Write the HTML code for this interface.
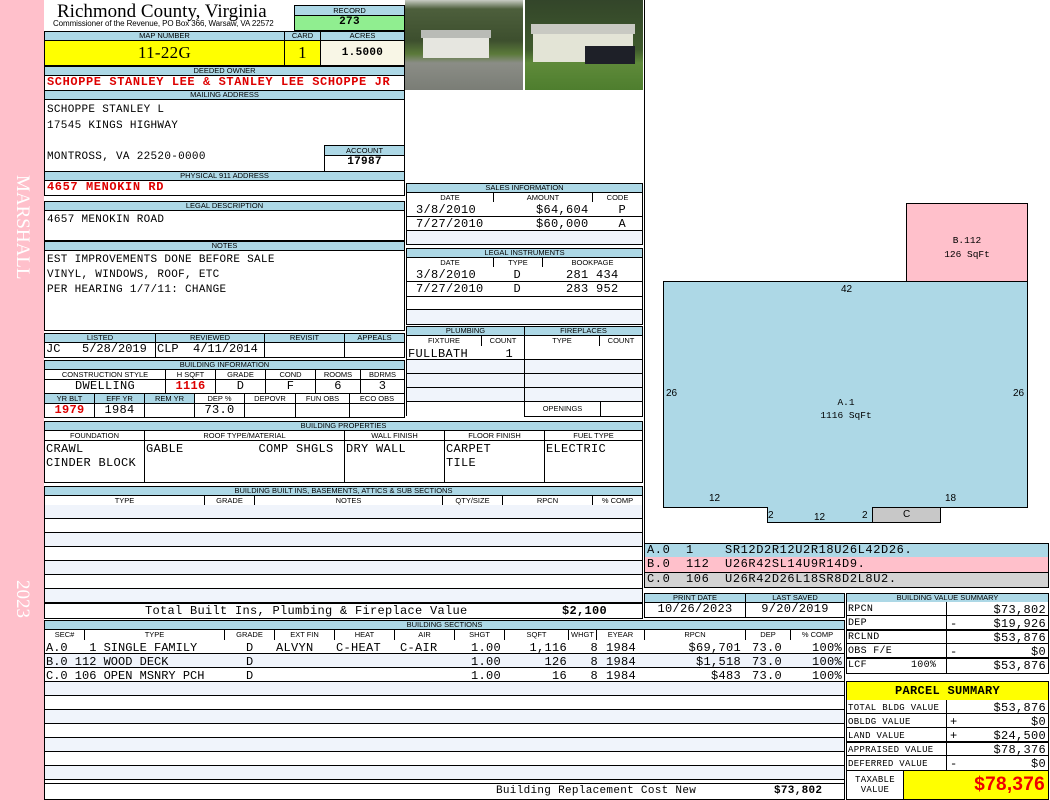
<!DOCTYPE html>
<html><head><meta charset="utf-8"><style>
*{margin:0;padding:0}
body{width:1050px;height:800px;position:relative;background:#fff;overflow:hidden;font-family:"Liberation Mono",monospace}
div{position:absolute;box-sizing:border-box}
.l{background:#add8e6;border:1px solid #000;font:7.5px/8px "Liberation Sans",sans-serif;text-align:center;color:#000;white-space:nowrap;overflow:hidden}
.h{background:#fff;border:1px solid #000;font:7.5px/9px "Liberation Sans",sans-serif;text-align:center;white-space:nowrap;overflow:hidden}
.c{border:1px solid #000;font-size:11px;line-height:13px;white-space:pre;overflow:hidden;letter-spacing:.3px}
.t{font-size:11px;line-height:13px;white-space:pre;letter-spacing:.3px}
.n{font-size:11px;line-height:13px;white-space:pre;letter-spacing:.3px;text-align:right}
.r{color:#d00;font-weight:bold}
.ctr{text-align:center}.rt{text-align:right;padding-right:3px}
.rows{background:repeating-linear-gradient(#f0f4fb 0 13px,#000 13px 14px,#fff 14px 27px,#000 27px 28px)}
</style></head><body>
<div style="left:0;top:0;width:44px;height:800px;background:#ffc0cb"></div>
<div style="left:22px;top:175px;width:0;height:0"><div style="left:-10px;top:0;transform:rotate(90deg);transform-origin:10px 10px;font:19px 'Liberation Serif',serif;color:#fff;white-space:nowrap;line-height:20px">MARSHALL</div></div>
<div style="left:22px;top:580px;width:0;height:0"><div style="left:-10px;top:0;transform:rotate(90deg);transform-origin:10px 10px;font:19px 'Liberation Serif',serif;color:#fff;white-space:nowrap;line-height:20px">2023</div></div>

<!-- header -->
<div style="left:57px;top:1px;font:19px/21px 'Liberation Serif',serif;white-space:nowrap">Richmond County, Virginia</div>
<div style="left:53px;top:19px;font:8px/9px 'Liberation Sans',sans-serif;white-space:nowrap;letter-spacing:-.1px">Commissioner of the Revenue, PO Box 366, Warsaw, VA 22572</div>
<div class="l" style="left:294px;top:5px;width:111px;height:11px;line-height:9px">RECORD</div>
<div class="c ctr" style="left:294px;top:15px;width:111px;height:16px;background:#90ee90;font-weight:bold">273</div>
<div class="l" style="left:44px;top:31px;width:241px;height:10px">MAP NUMBER</div>
<div class="l" style="left:284px;top:31px;width:37px;height:10px">CARD</div>
<div class="l" style="left:320px;top:31px;width:85px;height:10px">ACRES</div>
<div class="c ctr" style="left:44px;top:40px;width:241px;height:26px;background:#ff0;font:17px/24px 'Liberation Serif',serif">11-22G</div>
<div class="c ctr" style="left:284px;top:40px;width:37px;height:26px;background:#ff0;font:17px/24px 'Liberation Serif',serif">1</div>
<div class="c ctr" style="left:320px;top:40px;width:85px;height:26px;background:#f8f6e6;font-weight:bold;line-height:24px">1.5000</div>
<div class="l" style="left:44px;top:66px;width:361px;height:10px">DEEDED OWNER</div>
<div class="c r" style="left:44px;top:75px;width:361px;height:16px;padding-left:2px;font-size:12px;letter-spacing:.6px">SCHOPPE STANLEY LEE &amp; STANLEY LEE SCHOPPE JR</div>
<div class="l" style="left:44px;top:90px;width:361px;height:10px">MAILING ADDRESS</div>
<div class="c" style="left:44px;top:99px;width:361px;height:73px;padding:3px 2px;line-height:15.5px">SCHOPPE STANLEY L<br>17545 KINGS HIGHWAY<br><br>MONTROSS, VA 22520-0000</div>
<div class="l" style="left:324px;top:145px;width:81px;height:11px;line-height:9px">ACCOUNT</div>
<div class="c ctr" style="left:324px;top:155px;width:81px;height:17px;font-weight:bold;background:#fff">17987</div>
<div class="l" style="left:44px;top:171px;width:361px;height:10px">PHYSICAL 911 ADDRESS</div>
<div class="c r" style="left:44px;top:180px;width:361px;height:16px;padding-left:2px;font-size:12px;letter-spacing:.6px">4657 MENOKIN RD</div>
<div class="l" style="left:44px;top:201px;width:361px;height:10px">LEGAL DESCRIPTION</div>
<div class="c" style="left:44px;top:210px;width:361px;height:31px;padding:3px 2px">4657 MENOKIN ROAD</div>
<div class="l" style="left:44px;top:241px;width:361px;height:10px">NOTES</div>
<div class="c" style="left:44px;top:250px;width:361px;height:81px;padding:2px 2px;line-height:15px">EST IMPROVEMENTS DONE BEFORE SALE<br>VINYL, WINDOWS, ROOF, ETC<br>PER HEARING 1/7/11: CHANGE</div>

<div class="l" style="left:44px;top:333px;width:112px;height:10px">LISTED</div>
<div class="l" style="left:155px;top:333px;width:110px;height:10px">REVIEWED</div>
<div class="l" style="left:264px;top:333px;width:81px;height:10px">REVISIT</div>
<div class="l" style="left:344px;top:333px;width:61px;height:10px">APPEALS</div>
<div class="c" style="left:44px;top:342px;width:112px;height:16px;padding-left:1px;font-size:12px;letter-spacing:0">JC   5/28/2019</div>
<div class="c" style="left:155px;top:342px;width:110px;height:16px;padding-left:1px;font-size:12px;letter-spacing:0">CLP  4/11/2014</div>
<div class="c" style="left:264px;top:342px;width:81px;height:16px"></div>
<div class="c" style="left:344px;top:342px;width:61px;height:16px"></div>

<div class="l" style="left:44px;top:360px;width:361px;height:10px">BUILDING INFORMATION</div>
<div class="h" style="left:44px;top:369px;width:122px;height:11px">CONSTRUCTION STYLE</div>
<div class="h" style="left:165px;top:369px;width:51px;height:11px">H SQFT</div>
<div class="h" style="left:215px;top:369px;width:51px;height:11px">GRADE</div>
<div class="h" style="left:265px;top:369px;width:51px;height:11px">COND</div>
<div class="h" style="left:315px;top:369px;width:46px;height:11px">ROOMS</div>
<div class="h" style="left:360px;top:369px;width:45px;height:11px">BDRMS</div>
<div class="c ctr" style="left:44px;top:379px;width:122px;height:15px;font-size:12px">DWELLING</div>
<div class="c ctr r" style="left:165px;top:379px;width:51px;height:15px;font-size:12px">1116</div>
<div class="c ctr" style="left:215px;top:379px;width:51px;height:15px;font-size:12px">D</div>
<div class="c ctr" style="left:265px;top:379px;width:51px;height:15px;font-size:12px">F</div>
<div class="c ctr" style="left:315px;top:379px;width:46px;height:15px;font-size:12px">6</div>
<div class="c ctr" style="left:360px;top:379px;width:45px;height:15px;font-size:12px">3</div>
<div class="l" style="left:44px;top:393px;width:51px;height:11px;line-height:9px">YR BLT</div>
<div class="l" style="left:94px;top:393px;width:51px;height:11px;line-height:9px">EFF YR</div>
<div class="l" style="left:144px;top:393px;width:51px;height:11px;line-height:9px">REM YR</div>
<div class="h" style="left:194px;top:393px;width:51px;height:11px">DEP %</div>
<div class="h" style="left:244px;top:393px;width:52px;height:11px">DEPOVR</div>
<div class="h" style="left:295px;top:393px;width:55px;height:11px">FUN OBS</div>
<div class="h" style="left:349px;top:393px;width:56px;height:11px">ECO OBS</div>
<div class="c ctr r" style="left:44px;top:403px;width:51px;height:15px;font-size:12px">1979</div>
<div class="c ctr" style="left:94px;top:403px;width:51px;height:15px;font-size:12px">1984</div>
<div class="c" style="left:144px;top:403px;width:51px;height:15px"></div>
<div class="c ctr" style="left:194px;top:403px;width:51px;height:15px;font-size:12px">73.0</div>
<div class="c" style="left:244px;top:403px;width:52px;height:15px"></div>
<div class="c" style="left:295px;top:403px;width:55px;height:15px"></div>
<div class="c" style="left:349px;top:403px;width:56px;height:15px"></div>

<!-- building properties -->
<div class="l" style="left:44px;top:421px;width:599px;height:10px">BUILDING PROPERTIES</div>
<div class="h" style="left:44px;top:430px;width:101px;height:11px">FOUNDATION</div>
<div class="h" style="left:144px;top:430px;width:201px;height:11px">ROOF TYPE/MATERIAL</div>
<div class="h" style="left:344px;top:430px;width:101px;height:11px">WALL FINISH</div>
<div class="h" style="left:444px;top:430px;width:101px;height:11px">FLOOR FINISH</div>
<div class="h" style="left:544px;top:430px;width:99px;height:11px">FUEL TYPE</div>
<div class="c" style="left:44px;top:440px;width:101px;height:43px;padding:1px 1px;line-height:14px;font-size:12px">CRAWL<br>CINDER BLOCK</div>
<div class="c" style="left:144px;top:440px;width:201px;height:43px;padding:1px 1px;line-height:14px;font-size:12px">GABLE          COMP SHGLS</div>
<div class="c" style="left:344px;top:440px;width:101px;height:43px;padding:1px 1px;line-height:14px;font-size:12px">DRY WALL</div>
<div class="c" style="left:444px;top:440px;width:101px;height:43px;padding:1px 1px;line-height:14px;font-size:12px">CARPET<br>TILE</div>
<div class="c" style="left:544px;top:440px;width:99px;height:43px;padding:1px 1px;line-height:14px;font-size:12px">ELECTRIC</div>

<!-- built ins -->
<div class="l" style="left:44px;top:486px;width:599px;height:10px">BUILDING BUILT INS, BASEMENTS, ATTICS &amp; SUB SECTIONS</div>
<div class="h" style="left:44px;top:495px;width:161px;height:11px">TYPE</div>
<div class="h" style="left:204px;top:495px;width:51px;height:11px">GRADE</div>
<div class="h" style="left:254px;top:495px;width:189px;height:11px">NOTES</div>
<div class="h" style="left:442px;top:495px;width:61px;height:11px">QTY/SIZE</div>
<div class="h" style="left:502px;top:495px;width:91px;height:11px">RPCN</div>
<div class="h" style="left:592px;top:495px;width:51px;height:11px">% COMP</div>
<div class="rows" style="left:44px;top:505px;width:599px;height:99px;border:1px solid #000;border-top:0"></div>
<div class="c" style="left:44px;top:603px;width:599px;height:16px;font-size:12px;line-height:14px"><span class="t" style="position:absolute;left:100px;font-size:12px;line-height:14px">Total Built Ins, Plumbing &amp; Fireplace Value</span><span style="position:absolute;left:517px;font-weight:bold;font-size:12px">$2,100</span></div>

<!-- building sections -->
<div class="l" style="left:44px;top:620px;width:801px;height:10px">BUILDING SECTIONS</div>
<div class="h" style="left:44px;top:629px;width:41px;height:12px">SEC#</div>
<div class="h" style="left:84px;top:629px;width:141px;height:12px">TYPE</div>
<div class="h" style="left:224px;top:629px;width:51px;height:12px">GRADE</div>
<div class="h" style="left:274px;top:629px;width:61px;height:12px">EXT FIN</div>
<div class="h" style="left:334px;top:629px;width:61px;height:12px">HEAT</div>
<div class="h" style="left:394px;top:629px;width:61px;height:12px">AIR</div>
<div class="h" style="left:454px;top:629px;width:51px;height:12px">SHGT</div>
<div class="h" style="left:504px;top:629px;width:65px;height:12px">SQFT</div>
<div class="h" style="left:568px;top:629px;width:29px;height:12px">WHGT</div>
<div class="h" style="left:596px;top:629px;width:49px;height:12px">EYEAR</div>
<div class="h" style="left:644px;top:629px;width:102px;height:12px">RPCN</div>
<div class="h" style="left:745px;top:629px;width:46px;height:12px">DEP</div>
<div class="h" style="left:790px;top:629px;width:55px;height:12px">% COMP</div>
<div style="left:44px;top:640px;width:801px;height:144px;border:1px solid #000;border-top:0;background:repeating-linear-gradient(#fff 0 13px,#000 13px 14px,#f0f4fb 14px 27px,#000 27px 28px)"></div>
<div class="t" style="left:46px;top:641px;line-height:14px;font-size:12px;letter-spacing:0">A.0   1 SINGLE FAMILY<br>B.0 112 WOOD DECK<br>C.0 106 OPEN MSNRY PCH</div>
<div class="t" style="left:246px;top:641px;line-height:14px;font-size:12px">D<br>D<br>D</div>
<div class="t" style="left:276px;top:641px;line-height:14px;font-size:12px">ALVYN</div>
<div class="t" style="left:336px;top:641px;line-height:14px;font-size:12px">C-HEAT</div>
<div class="t" style="left:400px;top:641px;line-height:14px;font-size:12px">C-AIR</div>
<div class="n" style="left:454px;width:47px;top:641px;line-height:14px;font-size:12px">1.00<br>1.00<br>1.00</div>
<div class="n" style="left:504px;width:63px;top:641px;line-height:14px;font-size:12px">1,116<br>126<br>16</div>
<div class="n" style="left:568px;width:30px;top:641px;line-height:14px;font-size:12px">8<br>8<br>8</div>
<div class="t" style="left:606px;top:641px;line-height:14px;font-size:12px">1984<br>1984<br>1984</div>
<div class="n" style="left:644px;width:97px;top:641px;line-height:14px;font-size:12px">$69,701<br>$1,518<br>$483</div>
<div class="t" style="left:752px;top:641px;line-height:14px;font-size:12px">73.0<br>73.0<br>73.0</div>
<div class="n" style="left:790px;width:52px;top:641px;line-height:14px;font-size:12px">100%<br>100%<br>100%</div>
<div class="c" style="left:44px;top:783px;width:801px;height:17px"><span class="t" style="position:absolute;left:451px;top:1px">Building Replacement Cost New</span><span class="t" style="position:absolute;left:729px;top:1px;font-weight:bold">$73,802</span></div>

<!-- photos -->
<div style="left:405px;top:0;width:118px;height:90px;background:linear-gradient(#c8ccc4 0,#4d5f3c 10%,#3d4f2e 45%,#5b7a3a 60%,#8b8d86 70%,#7a7d76 100%)">
<div style="left:18px;top:36px;width:66px;height:22px;background:#e6e6e0"></div><div style="left:16px;top:30px;width:70px;height:8px;background:#b9bbb6"></div></div>
<div style="left:525px;top:0;width:118px;height:90px;background:linear-gradient(#33452a 0,#3f5a2c 55%,#5f8a3a 70%,#4e7e2e 100%)">
<div style="left:8px;top:32px;width:100px;height:30px;background:#e3e4d6"></div><div style="left:6px;top:24px;width:104px;height:10px;background:#c8c9c2"></div><div style="left:60px;top:46px;width:50px;height:18px;background:#1e2028"></div></div>

<!-- sales -->
<div class="l" style="left:406px;top:183px;width:237px;height:10px">SALES INFORMATION</div>
<div class="h" style="left:406px;top:192px;width:88px;height:11px">DATE</div>
<div class="h" style="left:493px;top:192px;width:100px;height:11px">AMOUNT</div>
<div class="h" style="left:592px;top:192px;width:51px;height:11px">CODE</div>
<div style="left:406px;top:202px;width:237px;height:43px;border:1px solid #000;border-top:0;background:linear-gradient(#fff 0 14px,#000 14px 15px,#fff 15px 28px,#000 28px 29px,#f0f4fb 29px)"></div>
<div class="t" style="left:416px;top:204px;font-size:12px">3/8/2010        $64,604    P</div>
<div class="t" style="left:416px;top:218px;font-size:12px">7/27/2010       $60,000    A</div>
<div class="l" style="left:406px;top:248px;width:237px;height:10px">LEGAL INSTRUMENTS</div>
<div class="h" style="left:406px;top:257px;width:88px;height:11px">DATE</div>
<div class="h" style="left:493px;top:257px;width:50px;height:11px">TYPE</div>
<div class="h" style="left:542px;top:257px;width:101px;height:11px">BOOKPAGE</div>
<div style="left:406px;top:267px;width:237px;height:58px;border:1px solid #000;border-top:0;background:linear-gradient(#fff 0 14px,#000 14px 15px,#fff 15px 29px,#000 29px 30px,#fff 30px 42px,#000 42px 43px,#f0f4fb 43px)"></div>
<div class="t" style="left:416px;top:269px;font-size:12px">3/8/2010     D      281 434</div>
<div class="t" style="left:416px;top:283px;font-size:12px">7/27/2010    D      283 952</div>
<div class="l" style="left:406px;top:326px;width:119px;height:10px">PLUMBING</div>
<div class="l" style="left:524px;top:326px;width:119px;height:10px">FIREPLACES</div>
<div class="h" style="left:406px;top:335px;width:76px;height:12px">FIXTURE</div>
<div class="h" style="left:481px;top:335px;width:44px;height:12px">COUNT</div>
<div class="h" style="left:524px;top:335px;width:76px;height:12px">TYPE</div>
<div class="h" style="left:599px;top:335px;width:44px;height:12px">COUNT</div>
<div style="left:406px;top:346px;width:119px;height:71px;border-right:1px solid #000;background:linear-gradient(#fff 0 13px,#000 13px 14px,#f0f4fb 14px 27px,#000 27px 28px,#f0f4fb 28px 41px,#000 41px 42px,#f0f4fb 42px 55px,#000 55px 56px,#fff 56px)"></div>
<div style="left:524px;top:346px;width:119px;height:71px;border:1px solid #000;border-top:0;background:linear-gradient(#fff 0 13px,#000 13px 14px,#f0f4fb 14px 27px,#000 27px 28px,#f0f4fb 28px 41px,#000 41px 42px,#f0f4fb 42px 55px,#000 55px 56px,#fff 56px)"></div>
<div style="left:406px;top:346px;width:1px;height:70px;background:#000"></div>
<div class="t" style="left:408px;top:348px;font-size:12px">FULLBATH     1</div>
<div class="h" style="left:524px;top:402px;width:77px;height:15px;line-height:13px;border-top:0">OPENINGS</div>

<!-- sketch -->
<div style="left:644px;top:0;width:1px;height:543px;background:#000"></div>
<svg style="position:absolute;left:0;top:0" width="1050" height="800">
<rect x="906.5" y="203.5" width="121" height="78" fill="#ffc0cb" stroke="#000"/>
<polygon points="663.5,281.5 1027.5,281.5 1027.5,507.5 872.5,507.5 872.5,522.5 767.5,522.5 767.5,507.5 663.5,507.5" fill="#add8e6" stroke="#000"/>
<rect x="872.5" y="507.5" width="68" height="15" fill="#c8c8c8" stroke="#000"/>
<g font-family="Liberation Sans,sans-serif" font-size="10">
<text x="841" y="292">42</text><text x="666" y="396">26</text><text x="1013" y="396">26</text>
<text x="709" y="501">12</text><text x="945" y="501">18</text><text x="768" y="518">2</text><text x="814" y="520">12</text><text x="862" y="518">2</text><text x="903" y="517">C</text></g>
<g font-family="Liberation Mono,monospace" font-size="9.5" text-anchor="middle">
<text x="846" y="405">A.1</text><text x="846" y="418">1116 SqFt</text>
<text x="967" y="243">B.112</text><text x="967" y="257">126 SqFt</text></g>
</svg>

<div class="c" style="left:644px;top:543px;width:405px;height:15px;background:#add8e6;border-bottom:0;font-size:12px;padding-left:2px;letter-spacing:.6px">A.0  1    SR12D2R12U2R18U26L42D26.</div>
<div class="c" style="left:644px;top:557px;width:405px;height:15px;background:#ffc0cb;border-bottom:0;border-top:0;font-size:12px;padding-left:2px;line-height:15px;letter-spacing:.6px">B.0  112  U26R42SL14U9R14D9.</div>
<div class="c" style="left:644px;top:572px;width:405px;height:16px;background:#d3d3d3;font-size:12px;padding-left:2px;letter-spacing:.6px">C.0  106  U26R42D26L18SR8D2L8U2.</div>

<div class="l" style="left:644px;top:593px;width:102px;height:10px">PRINT DATE</div>
<div class="l" style="left:745px;top:593px;width:100px;height:10px">LAST SAVED</div>
<div class="c ctr" style="left:644px;top:602px;width:102px;height:16px;font-size:12px">10/26/2023</div>
<div class="c ctr" style="left:745px;top:602px;width:100px;height:16px;font-size:12px">9/20/2019</div>

<div class="l" style="left:846px;top:593px;width:203px;height:10px">BUILDING VALUE SUMMARY</div>
<div style="left:846px;top:602px;width:203px;height:72px;border:1px solid #000;border-top:0;background:linear-gradient(#fff 0 13px,#000 13px 14px,#fff 14px 27px,#000 27px 29px,#fff 29px 41px,#000 41px 42px,#fff 42px 55px,#000 55px 57px,#fff 57px)"></div>
<div style="left:946px;top:602px;width:1px;height:71px;background:#000"></div>
<div class="t" style="left:848px;top:603px;font-size:10px;line-height:14px">RPCN<br>DEP<br>RCLND<br>OBS F/E<br>LCF       100%</div>
<div class="t" style="left:950px;top:603px;width:96px;font-size:12px;line-height:14px;text-align:right">$73,802<br>$19,926<br>$53,876<br>$0<br>$53,876</div>
<div class="t" style="left:950px;top:603px;font-size:12px;line-height:14px"><br>-<br><br>-</div>

<div class="c ctr" style="left:846px;top:681px;width:203px;height:20px;background:#ff0;font-weight:bold;font-size:12px;line-height:18px;font-family:'Liberation Mono',monospace">PARCEL SUMMARY</div>
<div style="left:846px;top:700px;width:203px;height:71px;border:1px solid #000;border-top:0;background:linear-gradient(#fff 0 13px,#000 13px 14px,#fff 14px 27px,#000 27px 28px,#fff 28px 41px,#000 41px 43px,#fff 43px 55px,#000 55px 56px,#fff 56px)"></div>
<div style="left:946px;top:700px;width:1px;height:70px;background:#000"></div>
<div class="t" style="left:848px;top:701px;font-size:9px;line-height:14px">TOTAL BLDG VALUE<br>OBLDG VALUE<br>LAND VALUE<br>APPRAISED VALUE<br>DEFERRED VALUE</div>
<div class="t" style="left:950px;top:701px;width:96px;font-size:12px;line-height:14px;text-align:right">$53,876<br>$0<br>$24,500<br>$78,376<br>$0</div>
<div class="t" style="left:950px;top:701px;font-size:12px;line-height:14px"><br>+<br>+<br><br>-</div>
<div class="c" style="left:846px;top:770px;width:58px;height:30px;font-size:9px;line-height:10px;text-align:center;padding-top:4px">TAXABLE<br>VALUE</div>
<div class="c" style="left:903px;top:770px;width:146px;height:30px;background:#ff0;color:#e00;font:bold 19px/28px 'Liberation Sans',sans-serif;text-align:right;padding-right:3px">$78,376</div>
</body></html>
